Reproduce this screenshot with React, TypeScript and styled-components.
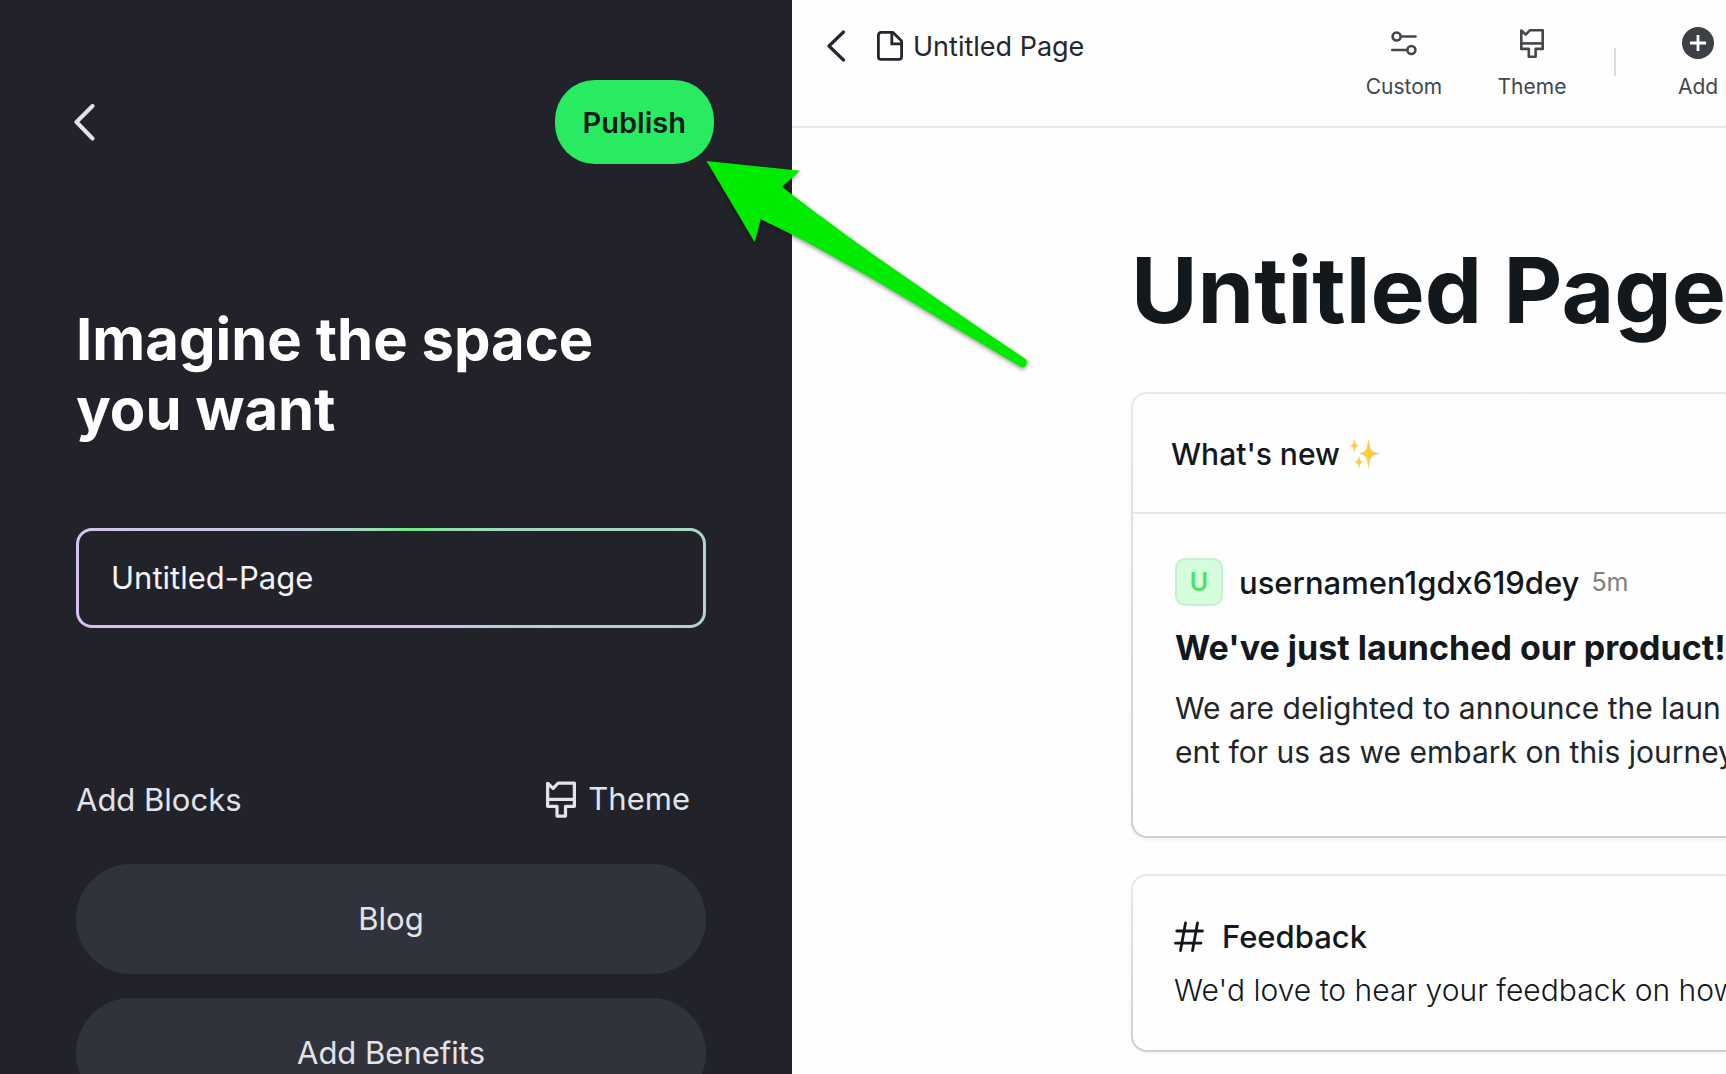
import React from "react";
import styled, { createGlobalStyle } from "styled-components";

const GlobalStyle = createGlobalStyle`
  *, *::before, *::after { box-sizing: border-box; }
  body { margin: 0; background: #fefefe; font-family: Inter, "Liberation Sans", sans-serif; overflow: hidden; }
  h1, h2, h3, p { margin: 0; }
  button, input { font-family: inherit; }
  svg { display: block; flex: none; }
`;

const Layout = styled.div`
  display: grid;
  grid-template-columns: 792px minmax(0, 1fr);
  position: relative;
  height: 100vh;
  overflow: hidden;
`;

const PlainButton = styled.button`
  display: flex;
  align-items: center;
  padding: 0;
  border: 0;
  background: none;
  color: inherit;
  cursor: pointer;
`;

/* Left: setup panel */
const Panel = styled.aside`
  background: #22222b;
  color: #e2e3e9;
  overflow: hidden;
`;

const PanelBar = styled.header`
  display: flex;
  align-items: center;
  justify-content: space-between;
  padding: 80px 78px 0 74px;
`;

const PublishButton = styled.button`
  height: 84px;
  padding: 0 28px;
  border: 0;
  border-radius: 40px;
  background: #29eb61;
  color: #10191a;
  font-size: 29px;
  font-weight: 600;
  cursor: pointer;
`;

const PanelBody = styled.div`
  display: flex;
  flex-direction: column;
  padding: 140px 86px 0 76px;
`;

const PanelTitle = styled.h1`
  max-width: 560px;
  color: #ffffff;
  font-size: 58px;
  line-height: 70px;
  font-weight: 700;
`;

const NameInput = styled.input`
  width: 100%;
  height: 100px;
  margin-top: 84px;
  padding: 0 32px 2px;
  border: 3px solid transparent;
  border-radius: 16px;
  outline: none;
  color: #f4f4f6;
  font-size: 31px;
  background:
    linear-gradient(#22222b, #22222b) padding-box,
    conic-gradient(
      #8fe0a4 0deg, #6bea80 25deg, #93dda9 50deg, #a3d9be 70deg, #abd8c8 81deg,
      #b5cfd8 99deg, #bfc9e0 122deg, #dcbcf5 142deg, #dbbcf3 261deg,
      #d2c5ec 279deg, #c4c9e0 292deg, #b1d2cf 310deg, #8fe0a4 360deg
    ) border-box;
`;

const BlocksHead = styled.div`
  display: flex;
  align-items: flex-start;
  justify-content: space-between;
  height: 40px;
  margin-top: 152px;
  padding-right: 16px;
`;

const BlocksTitle = styled.h2`
  font-size: 31px;
  line-height: 40px;
  font-weight: 400;
`;

const ThemeButton = styled(PlainButton)`
  gap: 12px;
  font-size: 31px;
  line-height: 38px;
`;

const BlockList = styled.div`
  display: flex;
  flex-direction: column;
  gap: 24px;
  margin-top: 44px;
`;

const BlockButton = styled.button`
  flex: none;
  height: 110px;
  padding: 0 0 2px;
  border: 0;
  border-radius: 55px;
  background: #31333c;
  color: #e2e3e9;
  font-size: 31px;
  cursor: pointer;
`;

/* Right: page preview, which runs past the window's edge */
const Preview = styled.main`
  overflow: hidden;
  background: #fefefe;
  color: #12181c;
`;

const Sheet = styled.div`
  width: calc(100% + 32px);
`;

const SheetBar = styled.header`
  display: flex;
  align-items: flex-start;
  justify-content: space-between;
  height: 128px;
  padding: 27px 22px 0 34px;
  border-bottom: 2px solid #e7e7e8;
`;

const Crumbs = styled.div`
  display: flex;
  align-items: center;
  gap: 31px;
  height: 38px;
  color: #23272f;
`;

const Crumb = styled.div`
  display: flex;
  align-items: center;
  gap: 10px;
  font-size: 27px;
`;

const Tools = styled.nav`
  display: flex;
  align-items: flex-start;
`;

const Tool = styled.button`
  display: flex;
  flex-direction: column;
  align-items: center;
  gap: 16px;
  width: 76px;
  padding: 0;
  border: 0;
  background: none;
  color: #43474d;
  font-size: 21px;
  line-height: 24px;
  cursor: pointer;

  & + & { margin-left: 52px; }
`;

const ToolIcon = styled.span`
  display: flex;
  align-items: center;
  justify-content: center;
  width: 32px;
  height: 32px;
`;

const Separator = styled.span`
  width: 2px;
  height: 28px;
  margin: 21px 44px 0;
  background: #dcdcde;
`;

const Content = styled.div`
  display: flex;
  flex-direction: column;
  padding: 106px 0 0 339px;
  white-space: nowrap;
`;

const PageTitle = styled.h1`
  font-size: 91px;
  line-height: 112px;
  font-weight: 700;
`;

const Card = styled.section<{ $gap: number }>`
  margin-top: ${(p) => p.$gap}px;
  border: 2px solid transparent;
  border-radius: 16px;
  background:
    linear-gradient(#fefefe, #fefefe) padding-box,
    linear-gradient(#e8e9ea, #cdcfd1) border-box;
  box-shadow: 0 2px 4px rgba(0, 0, 0, 0.05);
`;

const CardHead = styled.h2`
  display: flex;
  align-items: center;
  gap: 10px;
  height: 120px;
  padding: 2px 38px 0;
  border-bottom: 2px solid #e5e6e7;
  font-size: 30px;
  font-weight: 500;
`;

const Post = styled.article`
  padding: 44px 42px 62px;
`;

const Author = styled.div`
  display: flex;
  align-items: center;
  height: 48px;
  font-size: 31px;
  font-weight: 500;
`;

const Avatar = styled.span`
  display: flex;
  align-items: center;
  justify-content: center;
  width: 48px;
  height: 48px;
  margin-right: 16px;
  border: 2px solid #c8f0d0;
  border-radius: 10px;
  background: #d3fddb;
  color: #4fe068;
  font-size: 25px;
  font-weight: 600;
`;

const Age = styled.span`
  margin-left: 12px;
  color: #7b7e82;
  font-size: 25px;
  font-weight: 400;
`;

const PostTitle = styled.h3`
  margin-top: 20px;
  font-size: 34px;
  line-height: 44px;
  font-weight: 700;
`;

const PostText = styled.p`
  margin-top: 16px;
  color: #20262b;
  font-size: 30px;
  line-height: 44px;
`;

const Channel = styled.div`
  padding: 42px 41px 38px;
`;

const ChannelName = styled.h2`
  display: flex;
  align-items: center;
  gap: 18px;
  height: 36px;
  font-size: 31px;
  font-weight: 500;
`;

const ChannelText = styled.p`
  margin-top: 14px;
  font-size: 30px;
  line-height: 44px;
  font-weight: 300;
`;

const Pointer = styled.svg`
  position: absolute;
  top: 155px;
  left: 700px;
  pointer-events: none;
  filter: drop-shadow(0 2px 2px rgba(0, 0, 0, 0.4));
`;

const BrushIcon = ({ width, height }: { width: number; height: number }) => (
  <svg width={width} height={height} viewBox="0 0 24 29" fill="none" stroke="currentColor" strokeWidth="2.6" strokeLinejoin="round" aria-hidden="true">
    <path d="M1.3 1.5 5.700 5.600 9.800 1.300H22.700v18.600h-7.100v7.800H8.800v-7.800H1.300z" />
    <path d="M1.300 14.400h21.400" />
  </svg>
);

const SlidersIcon = () => (
  <svg width="26" height="25" viewBox="0 0 26 25" fill="none" stroke="currentColor" strokeWidth="2.600" strokeLinecap="round" aria-hidden="true">
    <circle cx="5.600" cy="5.500" r="4" />
    <path d="M10.500 5.500H24.500M1.300 19h14.500" />
    <circle cx="20.400" cy="19" r="4" />
  </svg>
);

const PlusIcon = () => (
  <svg width="32" height="32" viewBox="0 0 32 32" aria-hidden="true">
    <circle cx="16" cy="16" r="16" fill="#3d4147" />
    <path d="M16 8v16M8 16h16" stroke="#fff" strokeWidth="2.800" />
  </svg>
);

const PageIcon = () => (
  <svg width="26" height="30" viewBox="0 0 26 30" fill="none" stroke="currentColor" strokeWidth="2.800" strokeLinejoin="round" aria-hidden="true">
    <path d="M4 1.400h12L24.600 10v15.800a2.600 2.600 0 0 1-2.600 2.600H4a2.600 2.600 0 0 1-2.600-2.600V4A2.600 2.600 0 0 1 4 1.400z" />
    <path d="M14.800 1.600v11.200h9.600" strokeLinejoin="miter" />
  </svg>
);

const HashIcon = () => (
  <svg width="30" height="32" viewBox="0 0 30 32" fill="none" stroke="currentColor" strokeWidth="2.800" strokeLinecap="round" aria-hidden="true">
    <path d="M11.500 3 6.500 30.500M23.500 3l-5 27.500M2.800 11H28.500M1.500 23.200h25.500" />
  </svg>
);

const SparklesIcon = () => (
  <svg width="30" height="30" viewBox="0 0 30 30" role="img" aria-label="sparkles">
    <g fill="#fbd034" stroke="#f3c27a" strokeWidth="0.600">
      <path d="M18.500 1c.9 9 2.400 12.400 10.500 13.500-8.100 1.100-9.600 4.500-10.500 14-.9-9.500-2.400-12.900-9-14 6.600-1.100 8.100-4.500 9-13.500z" />
      <path d="M4.500.800c.5 3.900 1.300 5.200 4 6-2.700.8-3.500 2.100-4 6-.5-3.900-1.300-5.200-4-6 2.700-.8 3.500-2.100 4-6z" />
      <path d="M9 17.500c.4 3.500 1.200 4.700 3.800 5.500-2.600.8-3.400 2-3.800 5.700-.4-3.700-1.200-4.900-3.800-5.700 2.600-.8 3.400-2 3.800-5.500z" />
    </g>
  </svg>
);

export default function App() {
  return (
    <>
      <GlobalStyle />
      <Layout>
        <Panel>
          <PanelBar>
            <PlainButton aria-label="Back">
              <svg width="21" height="37" viewBox="0 0 21 37" fill="none" stroke="currentColor" strokeWidth="4" strokeLinecap="round" strokeLinejoin="round">
                <path d="M18.500 2 2.500 18 18.500 34.500" />
              </svg>
            </PlainButton>
            <PublishButton>Publish</PublishButton>
          </PanelBar>
          <PanelBody>
            <PanelTitle>Imagine the space you want</PanelTitle>
            <NameInput aria-label="Page name" defaultValue="Untitled-Page" />
            <BlocksHead>
              <BlocksTitle>Add Blocks</BlocksTitle>
              <ThemeButton>
                <BrushIcon width={30} height={37} />
                Theme
              </ThemeButton>
            </BlocksHead>
            <BlockList>
              <BlockButton>Blog</BlockButton>
              <BlockButton>Add Benefits</BlockButton>
            </BlockList>
          </PanelBody>
        </Panel>

        <Preview>
          <Sheet>
            <SheetBar>
              <Crumbs>
                <PlainButton aria-label="Go back">
                  <svg width="20" height="32" viewBox="0 0 20 32" fill="none" stroke="currentColor" strokeWidth="3.200" strokeLinecap="round" strokeLinejoin="round">
                    <path d="M17.500 2 3 16l14.500 14" />
                  </svg>
                </PlainButton>
                <Crumb>
                  <PageIcon />
                  Untitled Page
                </Crumb>
              </Crumbs>
              <Tools>
                <Tool>
                  <ToolIcon><SlidersIcon /></ToolIcon>
                  Custom
                </Tool>
                <Tool>
                  <ToolIcon><BrushIcon width={24} height={29} /></ToolIcon>
                  Theme
                </Tool>
                <Separator />
                <Tool>
                  <ToolIcon><PlusIcon /></ToolIcon>
                  Add
                </Tool>
              </Tools>
            </SheetBar>
            <Content>
              <PageTitle>Untitled Page</PageTitle>
              <Card $gap={46}>
                <CardHead>
                  What's new
                  <SparklesIcon />
                </CardHead>
                <Post>
                  <Author>
                    <Avatar>U</Avatar>
                    usernamen1gdx619dey
                    <Age>5m</Age>
                  </Author>
                  <PostTitle>We've just launched our product!</PostTitle>
                  <PostText>
                    We are delighted to announce the laun
                    <br />
                    ent for us as we embark on this journey
                  </PostText>
                </Post>
              </Card>
              <Card $gap={36}>
                <Channel>
                  <ChannelName>
                    <HashIcon />
                    Feedback
                  </ChannelName>
                  <ChannelText>We'd love to hear your feedback on how</ChannelText>
                </Channel>
              </Card>
            </Content>
          </Sheet>
        </Preview>

        <Pointer width="340" height="225" viewBox="700 155 340 225" aria-hidden="true">
          <path
            fill="#00eb00"
            d="M706.500 161 800 170.700 782 186.700C804 204 842 232 880 259.300 930 294 975 325 1025.500 359A4.800 4.800 0 0 1 1021.500 367.200C975 340 930 313 880 283.300 850 266 822 250 792 234.500L760.700 219.300 754.700 242.300z"
          />
        </Pointer>
      </Layout>
    </>
  );
}
